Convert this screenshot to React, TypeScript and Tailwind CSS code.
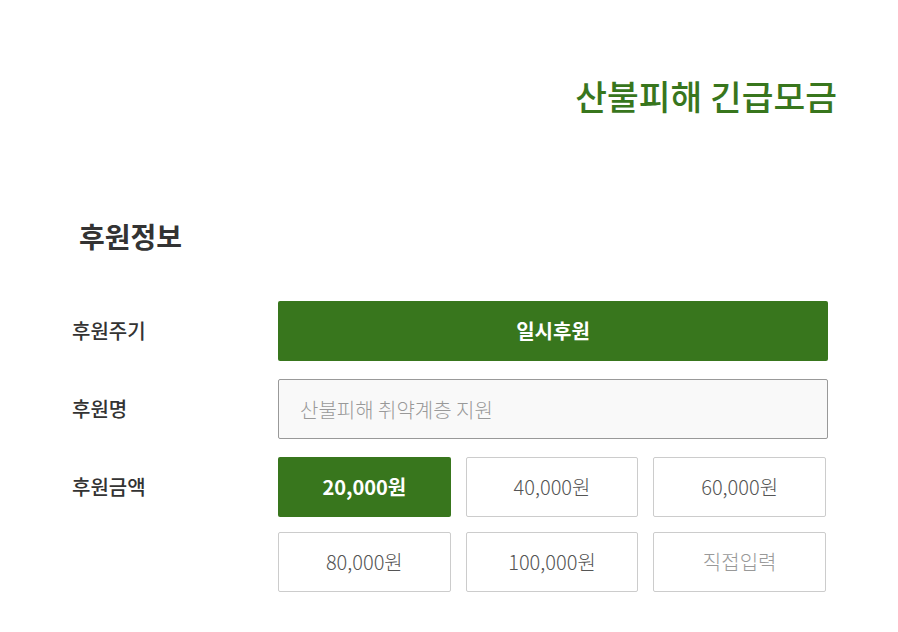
import { useState } from 'react';

const AMOUNTS = ['20,000원', '40,000원', '60,000원', '80,000원', '100,000원'];

export default function App() {
  const [selected, setSelected] = useState('20,000원');

  return (
    <div
      className="w-[898px] h-[632px] bg-white text-[#333] overflow-hidden"
      style={{ fontFamily: '"Noto Sans CJK KR", "Noto Sans", sans-serif' }}
    >
      <div className="flex justify-end pr-[61px] pt-[70px]">
        <h1 className="text-[34.5px] leading-[50px] font-medium text-[#38761d]">산불피해 긴급모금</h1>
      </div>

      <h2 className="mt-[96px] ml-[79px] text-[28px] leading-[40px] font-bold text-[#333]">후원정보</h2>

      <div className="mt-[45px] ml-[72px] flex flex-col gap-[18px]">
        {/* 후원주기 */}
        <div className="flex items-start">
          <div className="w-[206px] h-[60px] flex items-center text-[20px] font-medium">후원주기</div>
          <button className="w-[550px] h-[60px] rounded-[2px] bg-[#38761d] text-white text-[20px] font-bold">
            일시후원
          </button>
        </div>

        {/* 후원명 */}
        <div className="flex items-start">
          <div className="w-[206px] h-[60px] flex items-center text-[20px] font-medium">후원명</div>
          <input
            className="w-[550px] h-[60px] rounded-[2px] border border-[#999] bg-[#f9f9f9] px-[21px] text-[20px] font-light text-[#333] placeholder:text-[#999] outline-none"
            placeholder="산불피해 취약계층 지원"
          />
        </div>

        {/* 후원금액 */}
        <div className="flex items-start">
          <div className="w-[206px] h-[60px] flex items-center text-[20px] font-medium">후원금액</div>
          <div className="w-[548px] grid grid-cols-3 gap-x-[15px] gap-y-[15px]">
            {AMOUNTS.map((a) => (
              <button
                key={a}
                onClick={() => setSelected(a)}
                className={
                  selected === a
                    ? 'h-[60px] rounded-[2px] bg-[#38761d] text-white text-[20px] font-bold'
                    : 'h-[60px] rounded-[2px] border border-[#ccc] bg-white text-[#555] text-[20px] font-light'
                }
              >
                {a}
              </button>
            ))}
            <button className="h-[60px] rounded-[2px] border border-[#ccc] bg-white text-[#999] text-[20px] font-light">
              직접입력
            </button>
          </div>
        </div>
      </div>
    </div>
  );
}
